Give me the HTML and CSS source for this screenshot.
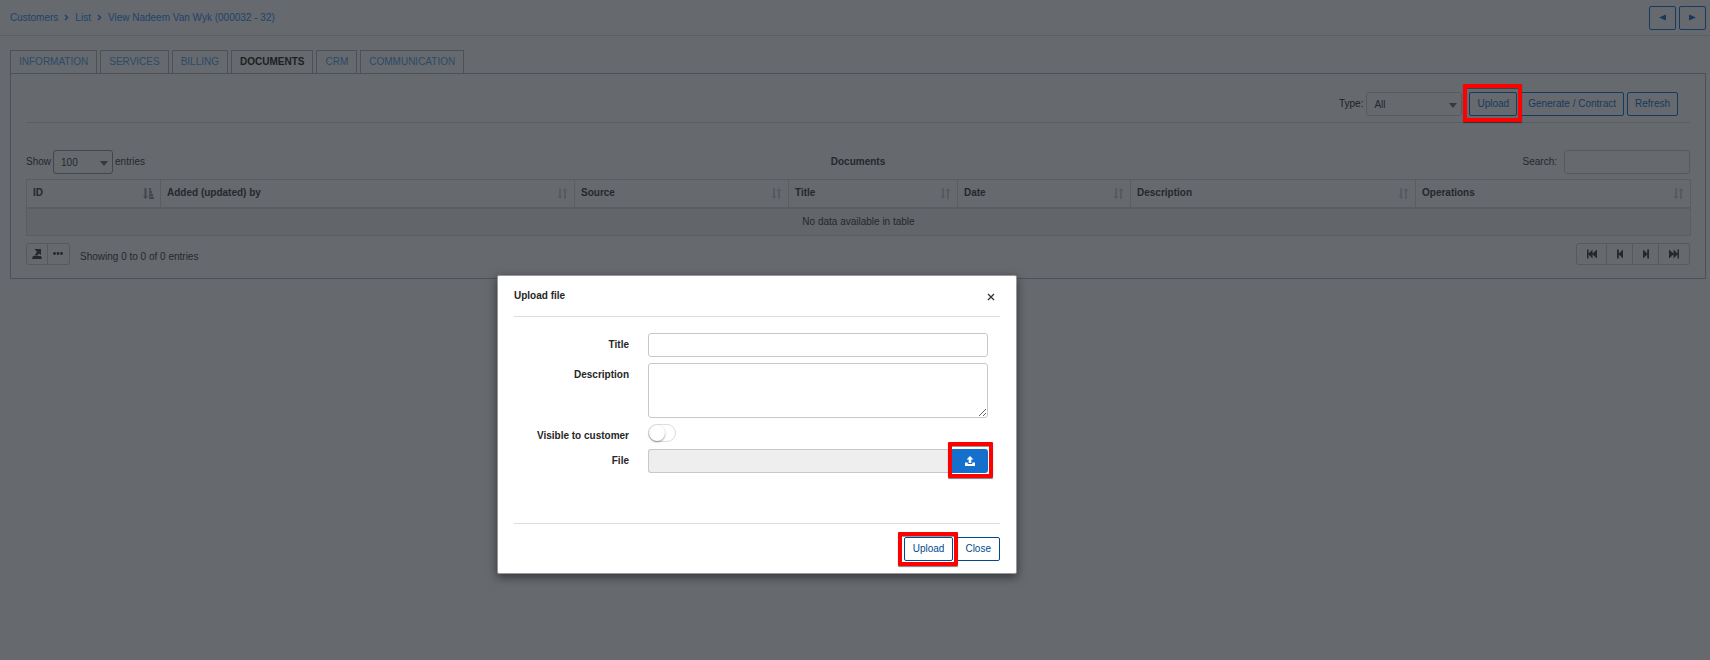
FILE: index.html
```html
<!DOCTYPE html>
<html lang="en">
<head>
<meta charset="utf-8">
<title>Customer documents</title>
<link rel="stylesheet" href="styles.css">
</head>
<body>
<svg class="defs" aria-hidden="true">
  <symbol id="sort" viewBox="0 0 10 11"><path d="M1.500 0h2v8H5l-2.500 3L0 8h1.500zM6.500 11h2V3H10L7.500 0 5 3h1.500z"/></symbol>
  <symbol id="sort-asc" viewBox="0 0 11 11"><path d="M1.500 0h2v8H5l-2.500 3L0 8h1.500zM6 0h2v2.600H6zM6 3h3v2.600H6zM6 6h4v2.600H6zM6 9h5v2H6z"/></symbol>
</svg>
<header class="topbar">
  <nav class="crumbs" aria-label="Breadcrumb">
    <a href="#">Customers</a>
    <svg class="chev" viewBox="0 0 5 7"><path d="M1 1 3.500 3.500 1 6"/></svg>
    <a href="#">List</a>
    <svg class="chev" viewBox="0 0 5 7"><path d="M1 1 3.500 3.500 1 6"/></svg>
    <a href="#">View Nadeem Van Wyk (000032 - 32)</a>
  </nav>
  <div class="btns">
    <button class="btn arrow" aria-label="Previous"><svg viewBox="0 0 8 8"><path d="M8 .5v7L0 4z"/></svg></button>
    <button class="btn arrow" aria-label="Next"><svg viewBox="0 0 8 8"><path d="M0 .5v7L8 4z"/></svg></button>
  </div>
</header>
<main class="page">
  <nav class="tabs">
    <a href="#">INFORMATION</a>
    <a href="#">SERVICES</a>
    <a href="#">BILLING</a>
    <a href="#" class="active">DOCUMENTS</a>
    <a href="#">CRM</a>
    <a href="#">COMMUNICATION</a>
  </nav>
  <section class="panel">
    <div class="toolbar">
      <label class="type-label" for="type">Type:</label>
      <span class="select type"><select id="type"><option>All</option></select></span>
      <button class="btn marked mark-toolbar">Upload</button>
      <button class="btn">Generate / Contract</button>
      <button class="btn">Refresh</button>
    </div>
    <div class="filters">
      <div class="length"><label for="len">Show</label><span class="select len"><select id="len"><option>100</option></select></span><span>entries</span></div>
      <h2>Documents</h2>
      <div class="search"><label for="search">Search:</label><input id="search" type="search"></div>
    </div>
    <table class="grid">
      <colgroup><col class="c1"><col class="c2"><col class="c3"><col class="c4"><col class="c5"><col class="c6"><col class="c7"></colgroup>
      <thead><tr>
        <th><div>ID<svg class="on"><use href="#sort-asc"/></svg></div></th>
        <th><div>Added (updated) by<svg><use href="#sort"/></svg></div></th>
        <th><div>Source<svg><use href="#sort"/></svg></div></th>
        <th><div>Title<svg><use href="#sort"/></svg></div></th>
        <th><div>Date<svg><use href="#sort"/></svg></div></th>
        <th><div>Description<svg><use href="#sort"/></svg></div></th>
        <th><div>Operations<svg><use href="#sort"/></svg></div></th>
      </tr></thead>
      <tbody><tr><td colspan="7">No data available in table</td></tr></tbody>
    </table>
    <div class="foot">
      <div class="group">
        <button aria-label="Export"><svg viewBox="0 0 10 10"><path d="M2.500 0h6.500v6L7 4.500 5.500 6.500H2.500L5 3zM1 7h8l1 3H0z"/></svg></button>
        <button aria-label="More"><svg viewBox="0 0 10 10"><circle cx="1.500" cy="4.500" r="1.400"/><circle cx="5" cy="4.500" r="1.400"/><circle cx="8.500" cy="4.500" r="1.400"/></svg></button>
      </div>
      <span class="info">Showing 0 to 0 of 0 entries</span>
      <div class="group pager">
        <button class="wide" aria-label="First page"><svg viewBox="0 0 10 9"><path d="M0 0h1.500v4L5.500 0v4L10 0v9L5.500 5v4l-4-4v4H0z"/></svg></button>
        <button aria-label="Previous page"><svg viewBox="0 0 10 9"><path d="M2 0h1.800v4L8 0v9L3.800 5v4H2z"/></svg></button>
        <button aria-label="Next page"><svg viewBox="0 0 10 9"><path d="M8 0H6.200v4L2 0v9l4.200-4v4H8z"/></svg></button>
        <button class="wide" aria-label="Last page"><svg viewBox="0 0 10 9"><path d="M10 0H8.500v4L4.500 0v4L0 0v9l4.500-4v4l4-4v4H10z"/></svg></button>
      </div>
    </div>
  </section>
</main>
<div class="modal" role="dialog" aria-labelledby="modal-title">
  <div class="modal-head">
    <h2 id="modal-title">Upload file</h2>
    <button class="close" aria-label="Close dialog"><svg viewBox="0 0 8 8"><path d="m1 1 6 6M7 1 1 7"/></svg></button>
  </div>
  <form class="form">
    <label for="title">Title</label><input id="title" class="field" type="text">
    <label for="desc">Description</label><textarea id="desc" class="field"></textarea>
    <label for="visible">Visible to customer</label><input id="visible" class="toggle" type="checkbox">
    <label for="file">File</label>
    <div class="file"><input id="file" class="field" type="text" readonly><button type="button" class="marked mark-file" aria-label="Choose file"><svg viewBox="0 0 10 10"><path d="M5 0 8.500 3.500H6.300V7H3.700V3.500H1.500zM0 6.500h2.700V8h4.600V6.500H10V10H0z"/></svg></button></div>
  </form>
  <div class="modal-foot">
    <button class="btn marked mark-submit">Upload</button>
    <button class="btn">Close</button>
  </div>
</div>
</body>
</html>
```
FILE: styles.css
```css
* { box-sizing: border-box; }
body {
  margin: 0;
  min-height: 100vh;
  background: #66696e;
  color: #25282d;
  font: 10px/14px "Liberation Sans", Arial, sans-serif;
}
a { color: #21436b; text-decoration: none; }
h2 { margin: 0; font-size: 10px; font-weight: bold; }
svg { display: block; fill: currentColor; }
button, input, select, textarea { font: inherit; color: inherit; margin: 0; }
.defs { display: none; }

.topbar {
  display: flex;
  align-items: center;
  justify-content: space-between;
  height: 36px;
  padding: 0 4px 0 10px;
  border-bottom: 1px solid #5b5e63;
}
.crumbs { display: flex; align-items: center; gap: 6px; }
.chev { width: 5px; height: 7px; fill: none; stroke: #21436b; stroke-width: 1.5; }
.btns { display: flex; gap: 3px; }
.btn {
  height: 24px;
  padding: 0 7px;
  border: 1px solid #163a5f;
  border-radius: 2px;
  background: transparent;
  color: #163a5f;
  white-space: nowrap;
}
.arrow { width: 27px; padding: 0 9px; }
.arrow svg { width: 7px; height: 7px; }

.page { padding: 14px 4px 0 10px; }
.tabs { display: flex; gap: 3px; }
.tabs a {
  height: 23px;
  padding: 4px 8px;
  border: 1px solid #4d5056;
  border-bottom: 0;
  color: #2d4a68;
}
.tabs .active { color: #1c1f23; font-weight: bold; }
.panel {
  padding: 18px 15px 13px;
  border: 1px solid #4d5056;
}
.toolbar {
  display: flex;
  align-items: center;
  justify-content: flex-end;
  gap: 3px;
  height: 31px;
  padding: 0 12px 6px 0;
  border-bottom: 1px solid #5b5e63;
}
.type-label { color: #1c1f23; }
.select { position: relative; display: block; }
.select::after {
  content: "";
  position: absolute;
  right: 5px;
  top: 11px;
  border: 4px solid transparent;
  border-top: 5px solid #36393e;
  border-bottom: 0;
  pointer-events: none;
}
.select select {
  display: block;
  appearance: none;
  width: 100%;
  height: 24px;
  padding: 1px 7px 0;
  border: 1px solid #56595e;
  border-radius: 3px;
  background: transparent;
}
.type { width: 96px; margin-right: 4px; }
.len { width: 60px; }
.len select { border-color: #43464b; }

.filters {
  display: grid;
  grid-template-columns: 1fr auto 1fr;
  align-items: center;
  margin-top: 27px;
}
.length { display: flex; align-items: center; gap: 2px; }
.search { display: flex; align-items: center; justify-content: flex-end; gap: 7px; }
.search input {
  width: 126px;
  height: 24px;
  border: 1px solid #56595e;
  border-radius: 3px;
  background: transparent;
}

.grid {
  width: 100%;
  margin-top: 5px;
  table-layout: fixed;
  border-collapse: collapse;
}
.grid th, .grid td { border: 1px solid #5a5d62; padding: 0 6px; }
.grid th { height: 28px; border-bottom-width: 2px; text-align: left; }
.grid th div { display: flex; align-items: center; justify-content: space-between; }
.grid th svg { width: 11px; height: 11px; color: #575a60; }
.grid th .on { color: #43464c; }
.grid td { height: 28px; background: #626569; text-align: center; }
.c1 { width: 134px; }
.c2 { width: 414px; }
.c3 { width: 214px; }
.c4 { width: 169px; }
.c5 { width: 173px; }
.c6 { width: 285px; }
.c7 { width: 275px; }

.foot { display: flex; align-items: center; margin-top: 7px; }
.group { display: flex; }
.group button {
  width: 22px;
  height: 22px;
  padding: 0 5px;
  border: 1px solid #56595e;
  background: transparent;
}
.group button + button { border-left: 0; }
.group button:first-child { border-radius: 3px 0 0 3px; }
.group button:last-child { border-radius: 0 3px 3px 0; }
.group svg { width: 10px; height: 10px; }
.info { margin-left: 10px; padding-top: 5px; }
.pager { margin-left: auto; }
.pager button { width: 26px; padding: 0 8px; }
.pager .wide { width: 31px; padding: 0 10px; }

.modal {
  position: absolute;
  top: 275px;
  left: 497px;
  width: 520px;
  padding: 0 16px 12px;
  border: 1px solid #96989b;
  border-radius: 2px;
  background: #fff;
  color: #262626;
  box-shadow: 0 3px 10px rgba(0, 0, 0, .5);
}
.modal-head {
  display: flex;
  align-items: center;
  justify-content: space-between;
  height: 41px;
  border-bottom: 1px solid #ddd;
}
.close { padding: 2px 5px 0; border: 0; background: none; color: #333; }
.close svg { width: 8px; height: 8px; stroke: currentColor; stroke-width: 1.3; }
.form {
  display: grid;
  grid-template-columns: 115px 1fr;
  column-gap: 19px;
  row-gap: 6px;
  padding: 16px 12px 50px 0;
  border-bottom: 1px solid #ddd;
}
.form label { padding-top: 5px; font-weight: bold; text-align: right; }
.field {
  display: block;
  width: 100%;
  height: 24px;
  border: 1px solid #c8c8c8;
  border-radius: 3px;
  background: #fff;
}
textarea.field { height: 55px; }
.toggle {
  appearance: none;
  width: 28px;
  height: 18px;
  border: 1px solid #ddd;
  border-radius: 9px;
}
.toggle::before {
  content: "";
  display: block;
  width: 16px;
  height: 16px;
  border-radius: 50%;
  box-shadow: 0 1px 2px rgba(0, 0, 0, .4);
}
.file { display: flex; }
.file .field { flex: 1; border-right: 0; border-radius: 3px 0 0 3px; background: #eee; }
.file button {
  width: 36px;
  height: 24px;
  padding: 0 13px;
  border: 0;
  border-radius: 0 3px 3px 0;
  background: #1470cc;
  color: #fff;
}
.file svg { width: 10px; height: 10px; }
.modal-foot { display: flex; justify-content: flex-end; gap: 3px; padding-top: 13px; }
.modal-foot .btn { padding: 0 8px; border-color: #00498f; color: #00498f; }

/* Highlight frames around the controls to click */
.marked { position: relative; }
.marked::after {
  content: "";
  position: absolute;
  border: 4px solid #f00;
  border-radius: 1px;
  box-shadow: 0 1px 1px rgba(0, 0, 0, .5), inset 0 1px 0 rgba(0, 0, 0, .4);
  pointer-events: none;
}
.mark-toolbar::after { inset: -9px -6px -7px -7px; }
.mark-file::after { inset: -7px -5px -5px -4px; }
.mark-submit::after { inset: -6px -6px -6px -7px; }
```
